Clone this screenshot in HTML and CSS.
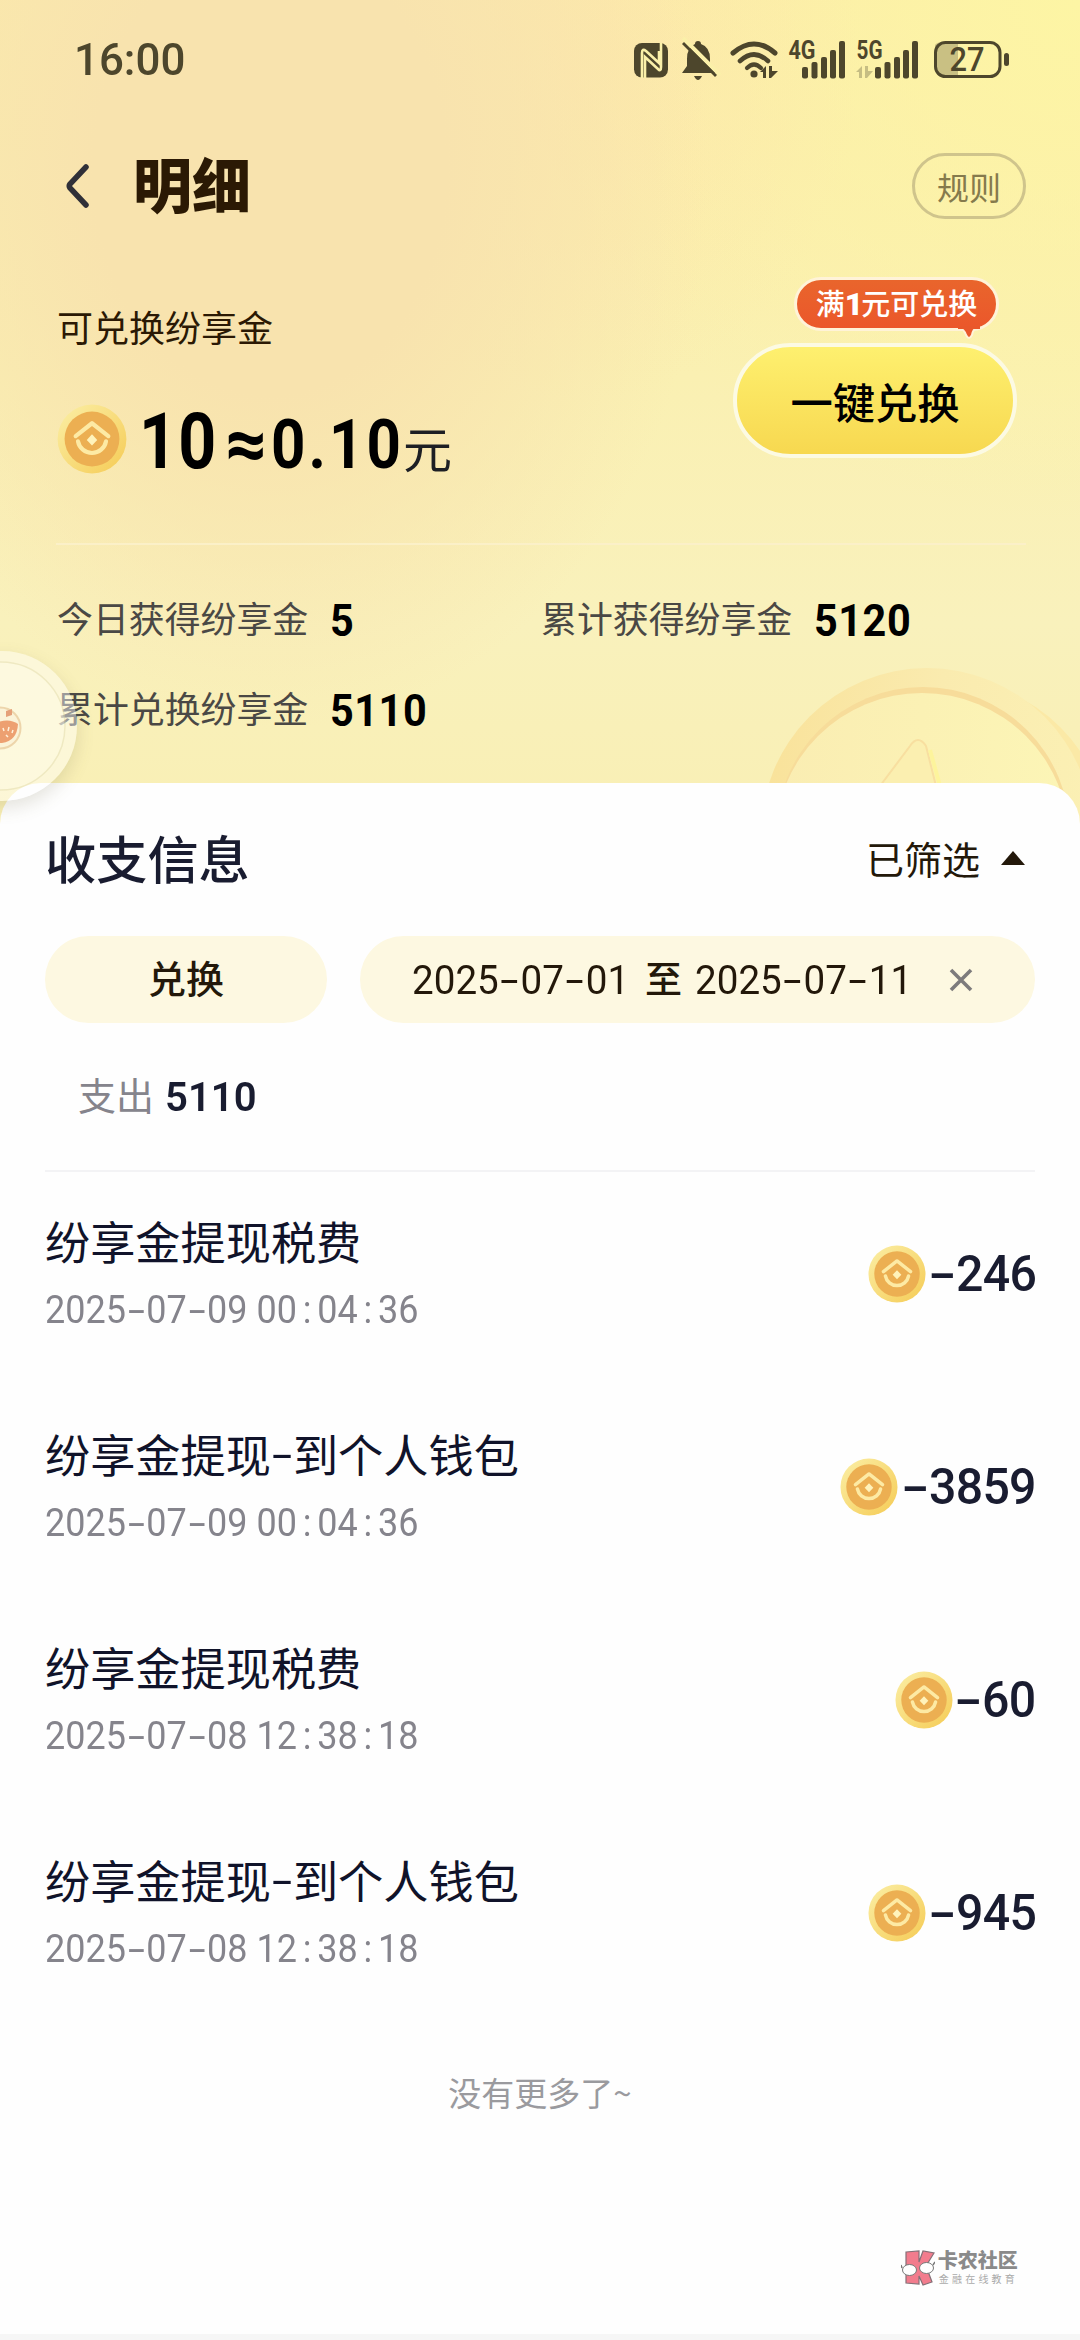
FILE: index.html
```html
<!DOCTYPE html>
<html lang="zh-CN">
<head>
<meta charset="utf-8">
<title>明细</title>
<link rel="stylesheet" href="styles.css">
</head>
<body>
<svg class="defs" width="0" height="0" aria-hidden="true">
  <defs>
    <linearGradient id="rim" x1="0" y1="0" x2="1" y2="1">
      <stop offset="0" stop-color="#fbefa6"/><stop offset="1" stop-color="#f5cb55"/>
    </linearGradient>
    <symbol id="coin" viewBox="0 0 60 60">
      <circle cx="30" cy="30" r="29.5" fill="url(#rim)"/>
      <circle cx="30" cy="30" r="23.5" fill="#ecaf52"/>
      <path d="M16 27.500 L30 16.500 L44 27.500" fill="none" stroke="#fdeaa4" stroke-width="3.6" stroke-linecap="round" stroke-linejoin="round"/>
      <path d="M18 32 A12.200 12.200 0 0 0 42 32" fill="none" stroke="#fdeaa4" stroke-width="3.6" stroke-linecap="round"/>
      <path d="M30 26 L34.500 30.800 L30 35.500 L25.500 30.800Z" fill="#fff3bb"/>
    </symbol>
  </defs>
</svg>
<div class="page">
  <header class="hero">
    <svg class="bigcoin" viewBox="0 0 330 180">
      <defs>
        <linearGradient id="bc" x1="0" y1="0" x2="1" y2="0">
          <stop offset="0" stop-color="#f9e29a"/><stop offset=".55" stop-color="#faebaf"/><stop offset="1" stop-color="#fbf0b4"/>
        </linearGradient>
        <linearGradient id="bf" x1="0" y1="0" x2="1" y2="0">
          <stop offset="0" stop-color="#faedb2"/><stop offset="1" stop-color="#fcf5b6"/>
        </linearGradient>
      </defs>
      <circle cx="196" cy="176" r="162" fill="#fbe9a6"/>
      <circle cx="177" cy="168" r="166" fill="url(#bc)"/>
      <circle cx="173" cy="168" r="147" fill="#f7dc9a"/>
      <circle cx="172" cy="174" r="147" fill="url(#bf)"/>
      <path d="M130 120 L160 80 Q168 68 176 80 L186 120" fill="#fbefb0" stroke="#f8dfa0" stroke-width="2"/>
      <path d="M180 84 L190 120" stroke="#fdf49c" stroke-width="4"/>
    </svg>
    <div class="status">
      <span class="clock num">16:00</span>
      <svg class="sys" viewBox="0 0 380 44" fill="#4d462c">
        <rect x="0" y="4" width="34" height="34.500" rx="8"/>
        <path d="M8 39 V14 Q8 9 12 12 L25 24 V12" fill="none" stroke="#faf0a9" stroke-width="2.600"/>
        <path d="M11 39 V18 L24 30 Q27 33 27 28 V4" fill="none" stroke="#faf0a9" stroke-width="2.600"/>
        <path d="M48 34 L53 27 V20 Q53 8 61 5 Q61 2 64 2 Q67 2 67 5 Q76 8 76 20 V27 L82 34Z"/>
        <path d="M60 37 H68 Q66 41 64 41 Q62 41 60 37Z"/>
        <path d="M49 -1 L86 36" stroke="#fbf0a9" stroke-width="4"/>
        <path d="M49 4 L82 37" stroke="#4d462c" stroke-width="2.800"/>
        <g fill="none" stroke="#4d462c" stroke-linecap="round">
          <path d="M99 14 Q120 -4 141 14" stroke-width="5"/>
          <path d="M106 22 Q120 9 134 22" stroke-width="4.600"/>
          <path d="M113 29 Q120 22 127 29" stroke-width="4.200"/>
        </g>
        <circle cx="120" cy="35" r="3.600"/>
        <path d="M126 33 L132 27 V39 H129 V33Z M135 27 H138 V32 H144 L137 39H135Z"/>
        <g>
          <rect x="168" y="28" width="6" height="11.500" rx="2"/><rect x="177.500" y="23" width="6" height="16.500" rx="2"/><rect x="187" y="18" width="6" height="21.500" rx="2"/><rect x="196" y="11" width="6" height="28.500" rx="2"/><rect x="205" y="2" width="6" height="37.500" rx="2"/>
          <rect x="241" y="28" width="6" height="11.500" rx="2"/><rect x="250.500" y="23" width="6" height="16.500" rx="2"/><rect x="260" y="18" width="6" height="21.500" rx="2"/><rect x="269" y="11" width="6" height="28.500" rx="2"/><rect x="278" y="2" width="6" height="37.500" rx="2"/>
        </g>
        <path d="M222 33 L228 27 V39 H225 V33Z M231 27 H234 V32 H239 L233 39H231Z" fill="#c6bd83"/>
        <text x="154.500" y="20" class="net" textLength="27" lengthAdjust="spacingAndGlyphs">4G</text>
        <text x="222.500" y="20" class="net" textLength="26" lengthAdjust="spacingAndGlyphs">5G</text>
        <path d="M301 6 Q303 3 309 3 H324 V38 H309 Q303 38 301 32Z" fill="#c9c083"/>
        <rect x="301.500" y="3.500" width="64.500" height="34" rx="10" fill="none" stroke="#4d462c" stroke-width="3"/>
        <rect x="370" y="14" width="5" height="13" rx="2.500"/>
        <text x="315.500" y="32" class="batt" textLength="35" lengthAdjust="spacingAndGlyphs">27</text>
      </svg>
    </div>
    <div class="navbar">
      <svg class="back" viewBox="0 0 24 44"><path d="M21 3 L5 20 Q3.500 22 5 24 L21 41" fill="none" stroke="#303038" stroke-width="5.500" stroke-linecap="round"/></svg>
      <h1 class="title">明细</h1>
      <button class="rules">规则</button>
    </div>
    <section class="balance">
      <div class="balance-main">
        <div class="caption">可兑换纷享金</div>
        <div class="sum">
          <svg class="coin-lg"><use href="#coin"/></svg>
          <span class="num points">10</span><span class="approx">≈</span><span class="num money">0.10</span><span class="yuan">元</span>
        </div>
      </div>
      <div class="redeem">
        <div class="tip">满<b>1</b>元可兑换
          <svg class="tail" viewBox="0 0 22 14"><path d="M1 2 Q6 3 8 9 Q11 15 14 9 Q15 3 19 2" fill="#e9582b" stroke="#fff3d8" stroke-width="2"/><rect x="0" y="0" width="22" height="3" fill="#e9582b"/></svg>
        </div>
        <button class="cta">一键兑换</button>
      </div>
    </section>
    <section class="stats">
      <div class="stat"><span class="label">今日获得纷享金</span><span class="num val">5</span></div>
      <div class="stat"><span class="label">累计获得纷享金</span><span class="num val">5120</span></div>
      <div class="stat"><span class="label">累计兑换纷享金</span><span class="num val">5110</span></div>
    </section>
  </header>
  <main class="sheet">
    <div class="sheet-head">
      <h2>收支信息</h2>
      <div class="filter">已筛选<svg viewBox="0 0 24 14"><path d="M12 0 L24 14 H0Z" fill="#23180a"/></svg></div>
    </div>
    <div class="chips">
      <div class="chip chip-type">兑换</div>
      <div class="chip chip-date">
        <span class="num range">2025<i>-</i>07<i>-</i>01</span><span class="to">至</span><span class="num range">2025<i>-</i>07<i>-</i>11</span>
        <svg viewBox="0 0 24 24"><path d="M2 2 L22 22 M22 2 L2 22" stroke="#7d7b7c" stroke-width="3.600"/></svg>
      </div>
    </div>
    <div class="total"><span>支出</span><b class="num">5110</b></div>
    <ul class="list">
      <li><div class="info"><div class="name">纷享金提现税费</div><time class="num">2025<i>-</i>07<i>-</i>09 00<s>:</s>04<s>:</s>36</time></div><div class="amount"><svg><use href="#coin"/></svg><span class="num"><i>-</i>246</span></div></li>
      <li><div class="info"><div class="name">纷享金提现<em>-</em>到个人钱包</div><time class="num">2025<i>-</i>07<i>-</i>09 00<s>:</s>04<s>:</s>36</time></div><div class="amount"><svg><use href="#coin"/></svg><span class="num"><i>-</i>3859</span></div></li>
      <li><div class="info"><div class="name">纷享金提现税费</div><time class="num">2025<i>-</i>07<i>-</i>08 12<s>:</s>38<s>:</s>18</time></div><div class="amount"><svg><use href="#coin"/></svg><span class="num"><i>-</i>60</span></div></li>
      <li><div class="info"><div class="name">纷享金提现<em>-</em>到个人钱包</div><time class="num">2025<i>-</i>07<i>-</i>08 12<s>:</s>38<s>:</s>18</time></div><div class="amount"><svg><use href="#coin"/></svg><span class="num"><i>-</i>945</span></div></li>
    </ul>
    <p class="end">没有更多了~</p>
    <footer class="mark">
      <svg viewBox="0 0 34 36">
        <path d="M5 2 L18 1 L18 12 L22 1 L33 3 L25 16 L31 32 L22 35 L18 26 V34 L5 33Z" fill="#f27c8d" stroke="#857077" stroke-width="1.200"/>
        <ellipse cx="8.500" cy="20" rx="7" ry="5.500" fill="#fff" stroke="#777" stroke-width="1"/>
        <ellipse cx="25.500" cy="18" rx="7" ry="5.500" fill="#fff" stroke="#777" stroke-width="1"/>
        <path d="M1 18 L0 15 M32 15 L34 12" stroke="#777" stroke-width="1.500"/>
      </svg>
      <div class="mark-text"><div class="mark-name">卡农社区</div><div class="mark-sub">金融在线教育</div></div>
    </footer>
  </main>
  <div class="bottom"></div>
  <svg class="float" viewBox="0 0 100 190">
    <defs>
      <filter id="sh" x="-30%" y="-30%" width="160%" height="160%"><feGaussianBlur stdDeviation="9"/></filter>
      <mask id="out" maskUnits="userSpaceOnUse" x="-100" y="-30" width="240" height="250"><rect x="-100" y="-30" width="240" height="250" fill="#fff"/><circle cx="2" cy="86" r="75" fill="#000"/></mask>
    </defs>
    <g mask="url(#out)"><circle cx="2" cy="93" r="75" fill="#6b6440" opacity=".17" filter="url(#sh)"/></g>
    <circle cx="2" cy="86" r="75" fill="#fff" opacity=".45"/>
    <circle cx="1" cy="86" r="64" fill="#fffde8" opacity=".4" stroke="#dcd5a2" stroke-width="1.500"/>
    <circle cx="0" cy="88" r="20.500" fill="#fbf3d8" stroke="#edd5ab" stroke-width="2"/>
    <path d="M-2 82 Q10 78 18 84 Q17 101 2 103 H-2Z" fill="#eda071"/>
    <path d="M6 71 L12 69 V75 L6 77Z" fill="#e5a078"/>
    <path d="M3 88 L4 91 M9 87 L8 91 M13 90 L12 93 M6 95 L8 97" stroke="#fff2dc" stroke-width="1.500"/>
  </svg>
</div>
</body>
</html>
```
FILE: styles.css
```css
* { box-sizing: border-box; margin: 0; padding: 0; }
body { font-family: "Noto Sans CJK SC", sans-serif; background: #fff; color: #23180a; }
button { font: inherit; border: 0; background: none; white-space: nowrap; }
i, em { font-style: normal; }
s { text-decoration: none; }
.defs { position: absolute; }
.num { font-family: Roboto, "Noto Sans CJK SC", sans-serif; white-space: nowrap; transform-origin: left center; }
.num i, .num s { display: inline-block; width: .565em; text-align: center; }
.num i { transform: translateY(-.01em) scaleX(1.7); }
.page { position: relative; width: 1080px; height: 2340px; overflow: hidden; display: flex; flex-direction: column; }

.hero {
  position: relative; height: 830px; flex: none;
  background:
    radial-gradient(ellipse 440px 560px at 270px 170px, #f8e3ae 0%, #f8e3ae 40%, rgba(248,227,174,0) 100%),
    radial-gradient(ellipse 280px 340px at 580px 60px, rgba(253,230,170,.7) 0%, rgba(253,230,170,0) 100%),
    radial-gradient(ellipse 560px 520px at 1080px 0, #fdf5a4 0%, rgba(253,245,164,0) 100%),
    linear-gradient(180deg, #fbebab 0%, #faf0b2 45%, #f9f1bc 75%, #f9efb4 100%);
}
.bigcoin { position: absolute; left: 750px; top: 666px; width: 330px; height: 180px; }
.status { position: relative; height: 120px; display: flex; justify-content: space-between; padding: 33px 66px 0 74px; }
.clock { font-size: 45px; line-height: 54px; font-weight: 500; color: #4d462c; transform: scaleX(.975); }
.sys { width: 380px; height: 44px; margin-top: 6px; overflow: visible; }
.net { font: 700 25px Roboto, sans-serif; }
.batt { font: 500 33px Roboto, sans-serif; }
.navbar { position: relative; height: 132px; display: flex; align-items: center; padding: 0 54px 0 65px; }
.back { width: 24px; height: 44px; }
.title { font-size: 59px; line-height: 70px; font-weight: 900; color: #2b1904; margin-left: 44px; transform: translateY(-3px); }
.rules { margin-left: auto; width: 114px; height: 66px; border: 3px solid #cfc48c; border-radius: 33px; font-size: 32px; line-height: 54px; color: #857a4c; }
.balance { position: relative; height: 293px; margin: 0 54px 0 56px; border-bottom: 2px solid #fbf0c8; display: flex; justify-content: space-between; }
.balance-main { padding-top: 49px; }
.caption { font-size: 36px; line-height: 50px; color: #2b1904; padding-left: 1px; }
.sum { display: flex; align-items: baseline; color: #000; height: 100px; margin-top: 38px; line-height: 106px; }
.coin-lg { width: 70px; height: 70px; align-self: center; margin: 0 12px 0 1px; }
.points { font-size: 77px; font-weight: 700; letter-spacing: 1.500px; transform: scaleX(.86); width: 86px; }
.approx { font: 900 72px/106px Roboto, "Noto Sans CJK SC", sans-serif; width: 46px; }
.money { font-size: 69px; font-weight: 700; letter-spacing: 3.500px; transform: scaleX(.87); width: 132px; }
.yuan { font-size: 49px; color: #1d1f24; }
.redeem { display: flex; flex-direction: column; align-items: flex-end; padding: 25px 9px 0 0; }
.tip { position: relative; margin-right: 18px; width: 205px; height: 54px; border: 3px solid #fff3d8; border-radius: 27px; background: linear-gradient(#e9652c, #eb572b); color: #fff; font-size: 29px; font-weight: 500; line-height: 45px; text-align: center; white-space: nowrap; }
.tip b { font-family: Roboto, sans-serif; font-weight: 900; font-size: 32px; letter-spacing: -2px; line-height: 1; }
.tail { position: absolute; right: 16px; bottom: -12px; width: 22px; height: 14px; }
.cta { margin-top: 12px; width: 284px; height: 115px; border: 4px solid #fcfae3; border-radius: 58px; background: linear-gradient(#fef06f, #f7d850); font-size: 42.300px; font-weight: 500; line-height: 98px; color: #000; }
.stats { position: relative; padding: 29px 0 0 57px; display: grid; grid-template-columns: 484px 1fr; grid-auto-rows: 90px; }
.stat { display: flex; align-items: center; }
.label { font-size: 35.900px; line-height: 50px; color: #4a4845; transform: translateY(-2px); }
.val { font-size: 45px; line-height: 50px; font-weight: 700; color: #000; margin-left: 22px; transform: translateY(2px) scaleX(.92); letter-spacing: .6px; }

.sheet { position: relative; margin-top: -47px; background: #fefefe; border-radius: 41px 41px 0 0; flex: 1; padding: 0 45px; display: flex; flex-direction: column; }
.sheet-head { height: 153px; display: flex; justify-content: space-between; align-items: center; padding-right: 10px; }
.sheet-head h2 { font-size: 51.200px; line-height: 60px; font-weight: 500; color: #191c30; transform: translateY(-3px); }
.filter { display: flex; align-items: center; gap: 21px; font-size: 38px; line-height: 50px; transform: translateY(-2px); }
.filter svg { width: 24px; height: 14px; }
.chips { display: flex; gap: 33px; height: 87px; }
.chip { border-radius: 44px; background: #fdf8e1; display: flex; align-items: center; }
.chip-type { width: 282px; justify-content: center; font-size: 38px; font-weight: 500; line-height: 50px; padding-bottom: 5px; }
.chip-date { flex: 1; padding-left: 52px; }
.range { font-size: 41.500px; font-weight: 450; line-height: 50px; width: 217px; transform: scaleX(.93); }
.to { font-size: 37px; font-weight: 500; line-height: 50px; margin: -5px 13px 0 16px; }
.chip-date svg { width: 24px; height: 24px; margin-left: 37px; }
.total { height: 149px; border-bottom: 2px solid #f3f3f5; display: flex; align-items: center; padding-left: 33px; font-size: 38px; line-height: 50px; color: #85848c; }
.total span { transform: translateY(-3px); }
.total b { font-size: 41.500px; font-weight: 600; color: #191c30; margin-left: 11px; transform: scaleX(.965); }
.list { list-style: none; }
.list li { height: 213px; display: flex; justify-content: space-between; }
.name { font-size: 45.200px; line-height: 60px; color: #10132a; margin-top: 39px; height: 60px; }
.name em { display: inline-block; width: 22px; text-align: center; transform: translateY(-4px) scaleX(1.500); }
time { display: block; font-size: 38.500px; line-height: 50px; color: #85848c; margin-top: 14px; transform: scaleX(.935); }
.amount { height: 60px; margin-top: 72px; display: flex; align-items: center; font-size: 50px; line-height: 60px; font-weight: 500; color: #191c30; }
.amount svg { width: 58px; height: 58px; margin-right: -1px; }
.amount .num { transform-origin: right center; transform: scaleX(.965); letter-spacing: -.7px; margin-right: -.7px; }
.amount .num i { width: 28px; letter-spacing: 0; }
.end { margin-top: 43px; font-size: 33px; line-height: 50px; text-align: center; color: #9a9a9e; }
.mark { margin: auto 17px 48px auto; display: flex; gap: 3px; align-items: center; color: #8a8a8a; white-space: nowrap; }
.mark svg { width: 34px; height: 36px; }
.mark-text { display: flex; flex-direction: column; gap: 1px; }
.mark-name { font-size: 20px; line-height: 20px; font-weight: 900; }
.mark-sub { font-size: 10px; line-height: 15px; letter-spacing: 3.200px; padding-left: 1px; color: #aaa; }
.bottom { height: 6px; flex: none; background: #f6f6f6; }
.float { position: absolute; left: 0; top: 640px; width: 100px; height: 190px; }
```
